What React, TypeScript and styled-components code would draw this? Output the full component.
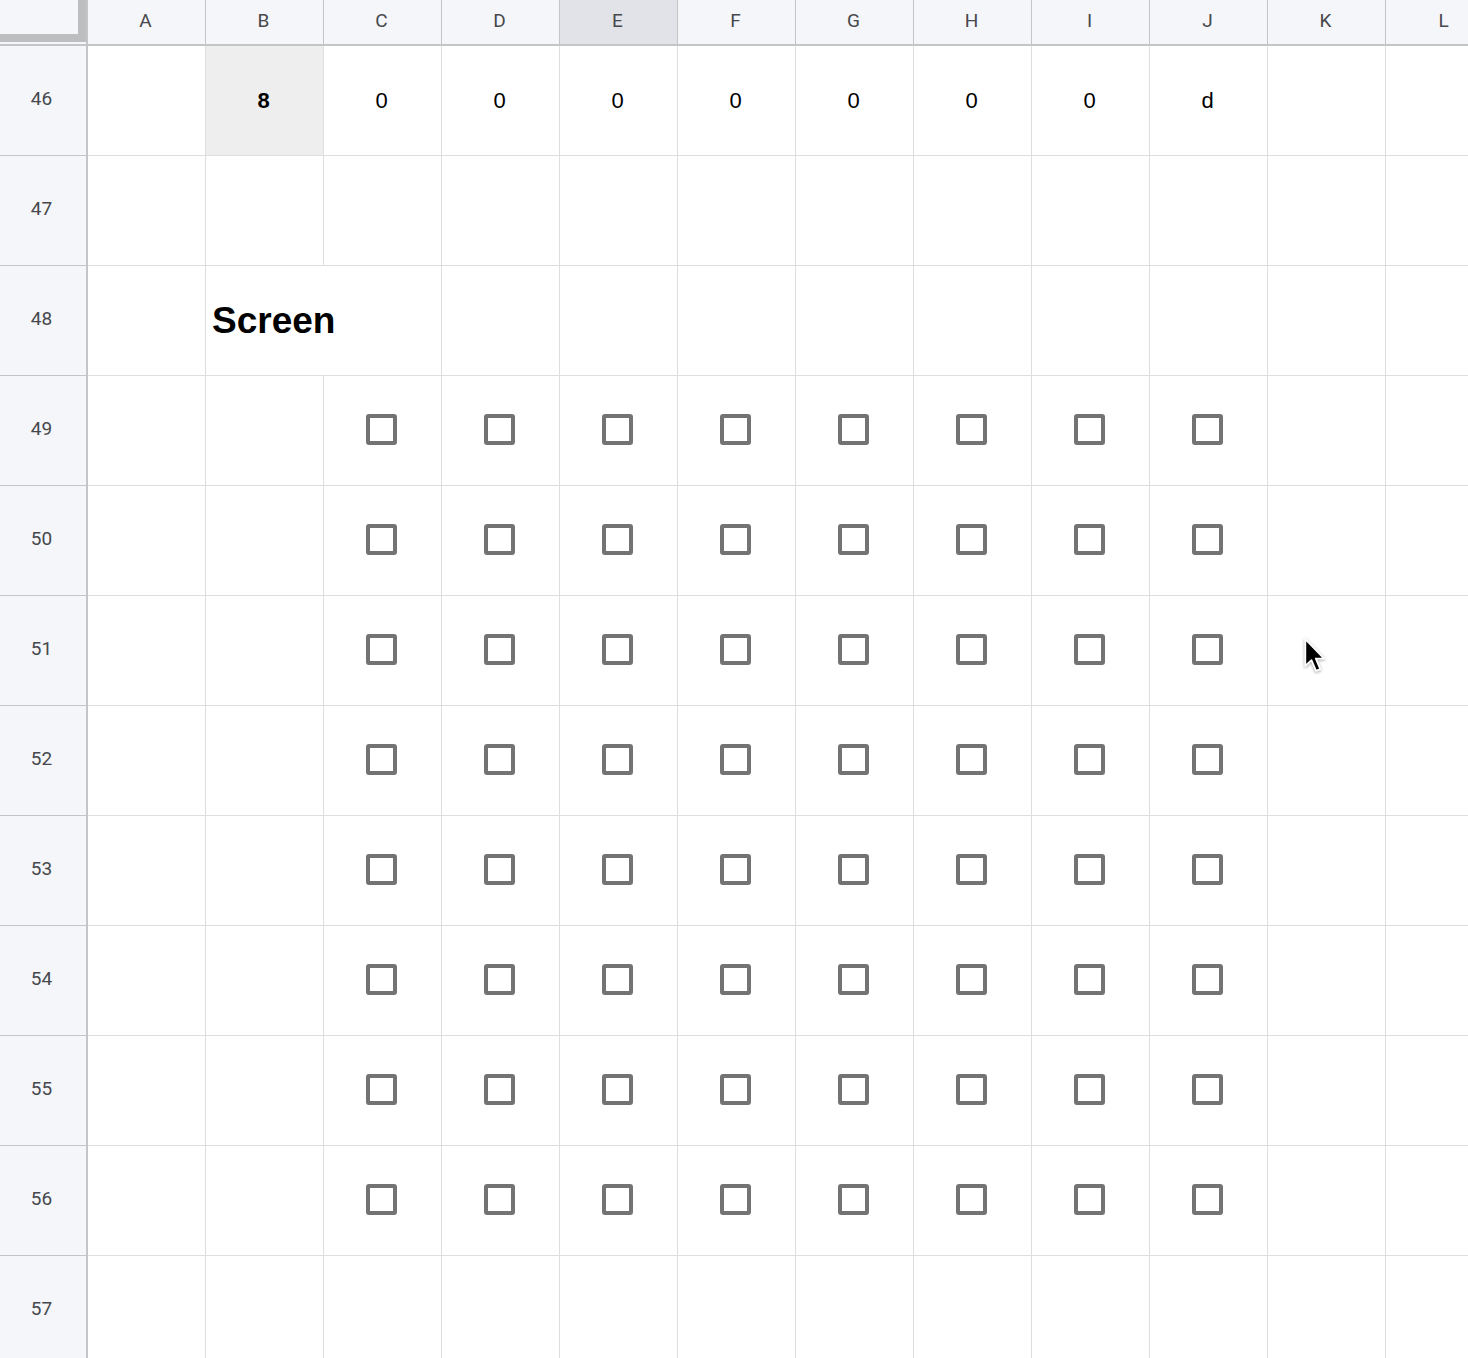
import styled, { createGlobalStyle } from "styled-components";

const GlobalStyle = createGlobalStyle`
  html, body {
    margin: 0;
    padding: 0;
    background: #ffffff;
    overflow: hidden;
  }
  body {
    font-family: Roboto, "Liberation Sans", Arial, sans-serif;
  }
`;

const columns = ["A", "B", "C", "D", "E", "F", "G", "H", "I", "J", "K", "L"];
const topValues = ["0", "0", "0", "0", "0", "0", "0", "d"];
const checkRows = [49, 50, 51, 52, 53, 54, 55, 56];

export default function App() {
  return (
    <>
      <GlobalStyle />
      <Page>
        <Sheet>
          <Corner>
            <FreezeHandle />
          </Corner>
          {columns.map((c) => (
            <ColHeader key={c} active={c === "E"}>
              {c}
            </ColHeader>
          ))}

          {/* row 46 */}
          <RowHeader>46</RowHeader>
          <Cell />
          <Cell selected bold>
            8
          </Cell>
          {topValues.map((v, i) => (
            <Cell key={i}>{v}</Cell>
          ))}
          <Cell />
          <Cell />

          {/* row 47 */}
          <RowHeader>47</RowHeader>
          {columns.map((c) => (
            <Cell key={c} />
          ))}

          {/* row 48 */}
          <RowHeader>48</RowHeader>
          <Cell />
          <TitleCell>Screen</TitleCell>
          {columns.slice(3).map((c) => (
            <Cell key={c} />
          ))}

          {checkRows.map((r) => (
            <Row key={r} num={r} />
          ))}

          <RowHeader>57</RowHeader>
          {columns.map((c) => (
            <Cell key={c} />
          ))}
        </Sheet>
        <Pointer viewBox="0 0 24 34" width="27" height="38">
          <path
            d="M2 1 L2 25 L7.5 19.8 L11.6 29.4 L15.4 27.8 L11.4 18.4 L18.8 18.4 Z"
            fill="#000000"
            stroke="#ffffff"
            strokeWidth="1.6"
            strokeLinejoin="round"
          />
        </Pointer>
      </Page>
    </>
  );
}

const Row = ({ num }: { num: number }) => (
  <>
    <RowHeader>{num}</RowHeader>
    <Cell />
    <Cell />
    {topValues.map((_, i) => (
      <Cell key={i}>
        <CheckBox />
      </Cell>
    ))}
    <Cell />
    <Cell />
  </>
);

const Page = styled.div`
  position: relative;
  width: 1468px;
  height: 1358px;
  overflow: hidden;
  background: #ffffff;
`;

const Sheet = styled.div`
  display: grid;
  grid-template-columns: 88px repeat(12, 118px);
  grid-template-rows: 46px;
  grid-auto-rows: 110px;
`;

const Corner = styled.div`
  box-sizing: border-box;
  background: #f5f6f9;
  border-right: 2px solid #c4c5c7;
  border-bottom: 2px solid #c4c5c7;
`;

const FreezeHandle = styled.div`
  box-sizing: border-box;
  width: 86px;
  height: 42px;
  border-right: 8px solid #bdbec0;
  border-bottom: 8px solid #bdbec0;
`;

const ColHeader = styled.div<{ active?: boolean }>`
  box-sizing: border-box;
  display: flex;
  align-items: center;
  justify-content: center;
  background: ${(p) => (p.active ? "#e1e3e8" : "#f5f6f9")};
  border-right: 1px solid #c4c5c7;
  border-bottom: 2px solid #c4c5c7;
  color: #46484c;
  font-size: 19px;
  padding: 0 2px 3px 0;
`;

const RowHeader = styled.div`
  box-sizing: border-box;
  display: flex;
  align-items: center;
  justify-content: center;
  background: #f5f6f9;
  border-right: 2px solid #c4c5c7;
  border-bottom: 1px solid #c4c5c7;
  color: #46484c;
  font-size: 19px;
  padding: 0 3px 4px 0;
`;

const Cell = styled.div<{ selected?: boolean; bold?: boolean }>`
  box-sizing: border-box;
  display: flex;
  align-items: center;
  justify-content: center;
  background: ${(p) => (p.selected ? "#eeeeee" : "#ffffff")};
  border-right: 1px solid #dedede;
  border-bottom: 1px solid #dedede;
  font-family: "Liberation Sans", Arial, sans-serif;
  font-size: 22px;
  font-weight: ${(p) => (p.bold ? 700 : 400)};
  color: #000000;
  padding: 0 2px 0 0;
`;

const TitleCell = styled(Cell)`
  grid-column: span 2;
  justify-content: flex-start;
  padding: 0 0 0 6px;
  font-size: 37px;
  font-weight: 700;
`;

const CheckBox = styled.div`
  box-sizing: border-box;
  width: 31px;
  height: 31px;
  margin-top: -2px;
  border: 4px solid #737373;
  border-radius: 3px;
  background: #ffffff;
`;

const Pointer = styled.svg`
  position: absolute;
  left: 1303px;
  top: 638px;
  filter: drop-shadow(0 1px 1.5px rgba(0, 0, 0, 0.35));
`;
